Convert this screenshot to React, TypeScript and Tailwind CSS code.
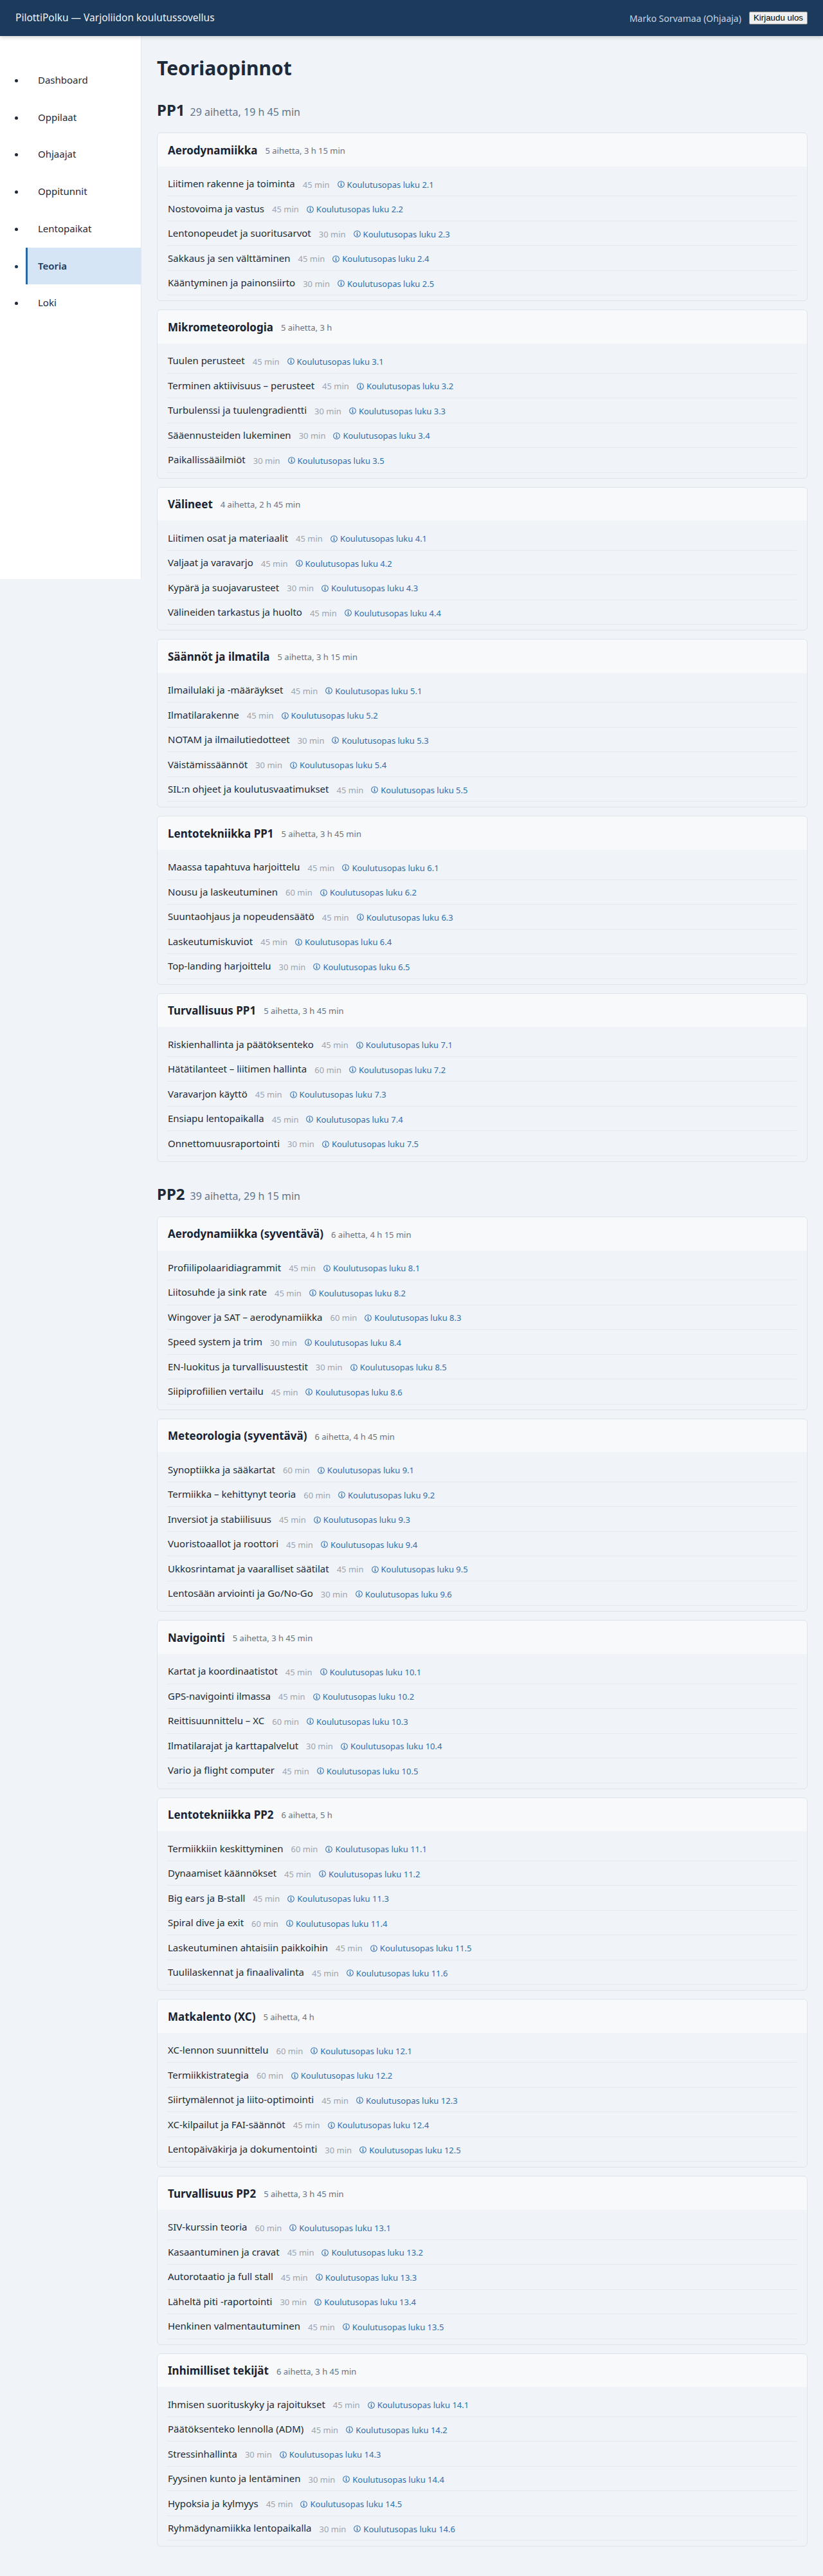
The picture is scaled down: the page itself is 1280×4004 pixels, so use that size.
import React from "react";

interface Topic {
  name: string;
  min: number;
  ch: string;
}

interface Category {
  title: string;
  topics: Topic[];
}

interface Level {
  code: string;
  categories: Category[];
}

const t = (name: string, min: number, ch: string): Topic => ({ name, min, ch });

const levels: Level[] = [
  {
    code: "PP1",
    categories: [
      {
        title: "Aerodynamiikka",
        topics: [
          t("Liitimen rakenne ja toiminta", 45, "2.1"),
          t("Nostovoima ja vastus", 45, "2.2"),
          t("Lentonopeudet ja suoritusarvot", 30, "2.3"),
          t("Sakkaus ja sen välttäminen", 45, "2.4"),
          t("Kääntyminen ja painonsiirto", 30, "2.5"),
        ],
      },
      {
        title: "Mikrometeorologia",
        topics: [
          t("Tuulen perusteet", 45, "3.1"),
          t("Terminen aktiivisuus – perusteet", 45, "3.2"),
          t("Turbulenssi ja tuulengradientti", 30, "3.3"),
          t("Sääennusteiden lukeminen", 30, "3.4"),
          t("Paikallissääilmiöt", 30, "3.5"),
        ],
      },
      {
        title: "Välineet",
        topics: [
          t("Liitimen osat ja materiaalit", 45, "4.1"),
          t("Valjaat ja varavarjo", 45, "4.2"),
          t("Kypärä ja suojavarusteet", 30, "4.3"),
          t("Välineiden tarkastus ja huolto", 45, "4.4"),
        ],
      },
      {
        title: "Säännöt ja ilmatila",
        topics: [
          t("Ilmailulaki ja -määräykset", 45, "5.1"),
          t("Ilmatilarakenne", 45, "5.2"),
          t("NOTAM ja ilmailutiedotteet", 30, "5.3"),
          t("Väistämissäännöt", 30, "5.4"),
          t("SIL:n ohjeet ja koulutusvaatimukset", 45, "5.5"),
        ],
      },
      {
        title: "Lentotekniikka PP1",
        topics: [
          t("Maassa tapahtuva harjoittelu", 45, "6.1"),
          t("Nousu ja laskeutuminen", 60, "6.2"),
          t("Suuntaohjaus ja nopeudensäätö", 45, "6.3"),
          t("Laskeutumiskuviot", 45, "6.4"),
          t("Top-landing harjoittelu", 30, "6.5"),
        ],
      },
      {
        title: "Turvallisuus PP1",
        topics: [
          t("Riskienhallinta ja päätöksenteko", 45, "7.1"),
          t("Hätätilanteet – liitimen hallinta", 60, "7.2"),
          t("Varavarjon käyttö", 45, "7.3"),
          t("Ensiapu lentopaikalla", 45, "7.4"),
          t("Onnettomuusraportointi", 30, "7.5"),
        ],
      },
    ],
  },
  {
    code: "PP2",
    categories: [
      {
        title: "Aerodynamiikka (syventävä)",
        topics: [
          t("Profiilipolaaridiagrammit", 45, "8.1"),
          t("Liitosuhde ja sink rate", 45, "8.2"),
          t("Wingover ja SAT – aerodynamiikka", 60, "8.3"),
          t("Speed system ja trim", 30, "8.4"),
          t("EN-luokitus ja turvallisuustestit", 30, "8.5"),
          t("Siipiprofiilien vertailu", 45, "8.6"),
        ],
      },
      {
        title: "Meteorologia (syventävä)",
        topics: [
          t("Synoptiikka ja sääkartat", 60, "9.1"),
          t("Termiikka – kehittynyt teoria", 60, "9.2"),
          t("Inversiot ja stabiilisuus", 45, "9.3"),
          t("Vuoristoaallot ja roottori", 45, "9.4"),
          t("Ukkosrintamat ja vaaralliset säätilat", 45, "9.5"),
          t("Lentosään arviointi ja Go/No-Go", 30, "9.6"),
        ],
      },
      {
        title: "Navigointi",
        topics: [
          t("Kartat ja koordinaatistot", 45, "10.1"),
          t("GPS-navigointi ilmassa", 45, "10.2"),
          t("Reittisuunnittelu – XC", 60, "10.3"),
          t("Ilmatilarajat ja karttapalvelut", 30, "10.4"),
          t("Vario ja flight computer", 45, "10.5"),
        ],
      },
      {
        title: "Lentotekniikka PP2",
        topics: [
          t("Termiikkiin keskittyminen", 60, "11.1"),
          t("Dynaamiset käännökset", 45, "11.2"),
          t("Big ears ja B-stall", 45, "11.3"),
          t("Spiral dive ja exit", 60, "11.4"),
          t("Laskeutuminen ahtaisiin paikkoihin", 45, "11.5"),
          t("Tuulilaskennat ja finaalivalinta", 45, "11.6"),
        ],
      },
      {
        title: "Matkalento (XC)",
        topics: [
          t("XC-lennon suunnittelu", 60, "12.1"),
          t("Termiikkistrategia", 60, "12.2"),
          t("Siirtymälennot ja liito-optimointi", 45, "12.3"),
          t("XC-kilpailut ja FAI-säännöt", 45, "12.4"),
          t("Lentopäiväkirja ja dokumentointi", 30, "12.5"),
        ],
      },
      {
        title: "Turvallisuus PP2",
        topics: [
          t("SIV-kurssin teoria", 60, "13.1"),
          t("Kasaantuminen ja cravat", 45, "13.2"),
          t("Autorotaatio ja full stall", 45, "13.3"),
          t("Läheltä piti -raportointi", 30, "13.4"),
          t("Henkinen valmentautuminen", 45, "13.5"),
        ],
      },
      {
        title: "Inhimilliset tekijät",
        topics: [
          t("Ihmisen suorituskyky ja rajoitukset", 45, "14.1"),
          t("Päätöksenteko lennolla (ADM)", 45, "14.2"),
          t("Stressinhallinta", 30, "14.3"),
          t("Fyysinen kunto ja lentäminen", 30, "14.4"),
          t("Hypoksia ja kylmyys", 45, "14.5"),
          t("Ryhmädynamiikka lentopaikalla", 30, "14.6"),
        ],
      },
    ],
  },
];

const navItems = ["Dashboard", "Oppilaat", "Ohjaajat", "Oppitunnit", "Lentopaikat", "Teoria", "Loki"];

const fmt = (mins: number) => {
  const h = Math.floor(mins / 60);
  const m = mins % 60;
  if (h === 0) return `${m} min`;
  if (m === 0) return `${h} h`;
  return `${h} h ${m} min`;
};

const sum = (topics: Topic[]) => topics.reduce((a, b) => a + b.min, 0);

const InfoIcon = () => (
  <svg width="11" height="11" viewBox="0 0 12 12" className="shrink-0 self-center">
    <circle cx="6" cy="6" r="5.3" fill="none" stroke="currentColor" strokeWidth="1.1" />
    <circle cx="6.1" cy="3.4" r="0.85" fill="currentColor" />
    <rect x="5.4" y="5" width="1.4" height="3.7" fill="currentColor" />
    <rect x="4.6" y="5" width="1" height="0.9" fill="currentColor" />
    <rect x="4.6" y="8.2" width="3" height="0.9" fill="currentColor" />
  </svg>
);

const CategoryCard = ({ cat }: { cat: Category }) => {
  const total = sum(cat.topics);
  return (
    <div className="mb-[13px] border border-[#dde3ea] rounded-md overflow-hidden">
      <div className="bg-[#f7f9fb] px-4 h-[51.7px] flex items-center">
        <h3 className="text-[17px] leading-[23px] font-bold text-[#1a2332]">{cat.title}</h3>
        <span className="ml-3 mt-[2px] text-[13px] leading-[16px] text-[#6b7280]">
          {cat.topics.length} aihetta, {fmt(total)}
        </span>
      </div>
      <ul className="px-4 py-2">
        {cat.topics.map((tp) => (
          <li key={tp.ch} className="h-[38.5px] flex items-center gap-3 border-b border-[#e3e8ee]">
            <span className="text-[15px] leading-[19px] text-[#222b36]">{tp.name}</span>
            <span className="mt-[2px] text-[13px] leading-[16px] text-[#9ca3af]">{tp.min} min</span>
            <a className="mt-[2px] inline-flex items-center gap-[4px] text-[13px] leading-[16px] text-[#2f6eab]">
              <InfoIcon />
              Koulutusopas luku {tp.ch}
            </a>
          </li>
        ))}
      </ul>
    </div>
  );
};

export default function App() {
  return (
    <div className="min-h-screen bg-[#f0f4f8] font-['Noto_Sans',sans-serif] text-[#1f2937]">
      <header className="relative z-10 h-14 bg-[#1b3a5c] px-6 flex items-center justify-between shadow-[0_2px_6px_rgba(0,0,0,0.18)]">
        <div className="text-[15.5px] text-[#eef3f8]">PilottiPolku — Varjoliidon koulutussovellus</div>
        <div className="flex items-center gap-3">
          <span className="text-[14px] text-[#c9d4e0]">Marko Sorvamaa (Ohjaaja)</span>
          <button className="bg-[#efefef] border border-[#8f8f8f] rounded-[2px] px-[6px] h-5 leading-[18px] text-[13.33px] text-black font-['Liberation_Sans',Arial,sans-serif]">
            Kirjaudu ulos
          </button>
        </div>
      </header>
      <div className="flex items-start">
        <aside className="w-[220px] shrink-0 h-[844px] bg-white border-r border-[#e2e8f0] pt-6">
          <ul className="list-disc pl-10 my-4 text-[15px]">
            {navItems.map((item) => {
              const active = item === "Teoria";
              return (
                <li
                  key={item}
                  className={
                    active
                      ? "py-[17px] pl-4 leading-[23.7px] border-l-[3px] border-[#2a66a3] bg-[#d5e5f5] font-semibold text-[#1b3a5c]"
                      : "py-[17px] pl-4 leading-[23.7px] border-l-[3px] border-transparent text-[#1f2937]"
                  }
                >
                  {item}
                </li>
              );
            })}
          </ul>
        </aside>
        <main className="flex-1 px-6 pt-6 pb-6">
          <h1 className="mt-2 mb-[10px] text-[30px] leading-[36px] font-bold text-[#1e2a3a]">Teoriaopinnot</h1>
          {levels.map((lv) => {
            const topics = lv.categories.flatMap((c) => c.topics);
            return (
              <section key={lv.code} className="pt-[21px]">
                <h2 className="mb-4 text-[24px] leading-[31.2px] font-bold text-[#1e2a3a]">
                  {lv.code}
                  <span className="ml-2 text-[16px] font-normal text-[#64748b]">
                    {topics.length} aihetta, {fmt(sum(topics))}
                  </span>
                </h2>
                {lv.categories.map((c) => (
                  <CategoryCard key={c.title} cat={c} />
                ))}
              </section>
            );
          })}
        </main>
      </div>
    </div>
  );
}
